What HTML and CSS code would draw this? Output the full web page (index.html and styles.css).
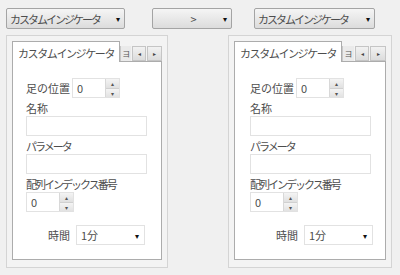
FILE: index.html
```html
<!DOCTYPE html>
<html lang="ja">
  <head>
    <meta charset="UTF-8" />
    <meta name="viewport" content="width=device-width, initial-scale=1.0" />
    <title>インジケータ設定</title>

    <link rel="stylesheet" href="styles.css">
  </head>

  <body>
    <div class="toolbar">
      <div class="combo combo-left">
        <span class="combo-text kana">カスタムインジケータ</span>
        <span class="arrow">&#9662;</span>
      </div>
      <div class="combo combo-mid">
        <span class="combo-text center">&gt;</span>
        <span class="arrow">&#9662;</span>
      </div>
      <div class="combo combo-right">
        <span class="combo-text kana">カスタムインジケータ</span>
        <span class="arrow">&#9662;</span>
      </div>
    </div>

    <div class="panels">
      <section class="panel panel-left">
        <div class="tabs">
          <div class="tab">カスタムインジケータ</div>
          <div class="tab-clip">ヨ</div>
          <div class="tab-btn">&#9666;</div>
          <div class="tab-btn">&#9656;</div>
        </div>
        <div class="tab-body">
          <div class="row">
            <label>足の位置</label>
            <div class="spin">
              <span class="spin-val">0</span>
              <div class="spin-btns"><span>&#9652;</span><span>&#9662;</span></div>
            </div>
          </div>
          <label class="cap">名称</label>
          <div class="field"></div>
          <label class="cap kana">パラメータ</label>
          <div class="field"></div>
          <label class="cap kana">配列インデックス番号</label>
          <div class="spin">
            <span class="spin-val">0</span>
            <div class="spin-btns"><span>&#9652;</span><span>&#9662;</span></div>
          </div>
          <div class="row time">
            <label>時間</label>
            <div class="select"><span>1分</span><span class="arrow">&#9662;</span></div>
          </div>
        </div>
      </section>

      <section class="panel panel-right">
        <div class="tabs">
          <div class="tab">カスタムインジケータ</div>
          <div class="tab-clip">ヨ</div>
          <div class="tab-btn">&#9666;</div>
          <div class="tab-btn">&#9656;</div>
        </div>
        <div class="tab-body">
          <div class="row">
            <label>足の位置</label>
            <div class="spin">
              <span class="spin-val">0</span>
              <div class="spin-btns"><span>&#9652;</span><span>&#9662;</span></div>
            </div>
          </div>
          <label class="cap">名称</label>
          <div class="field"></div>
          <label class="cap kana">パラメータ</label>
          <div class="field"></div>
          <label class="cap kana">配列インデックス番号</label>
          <div class="spin">
            <span class="spin-val">0</span>
            <div class="spin-btns"><span>&#9652;</span><span>&#9662;</span></div>
          </div>
          <div class="row time">
            <label>時間</label>
            <div class="select"><span>1分</span><span class="arrow">&#9662;</span></div>
          </div>
        </div>
      </section>
    </div>
  </body>
</html>
```

FILE: styles.css
```css
body {
  margin: 0;
  background-color: #f0f0f0;
  font-family: "Noto Sans CJK JP", "Noto Sans", sans-serif;
  font-size: 11px;
  color: #4d4d4d;
}

/* katakana runs are narrower in the original UI font */
.kana {
  letter-spacing: -2px;
}

/* top combo row */
.toolbar {
  display: flex;
  padding-top: 8px;
  height: 21px;
}
.combo {
  display: flex;
  align-items: center;
  box-sizing: border-box;
  height: 21px;
  border: 1px solid #a4a4a4;
  border-radius: 2px;
  background: linear-gradient(#f5f5f5, #dcdcdc);
  padding: 0 4px 0 3px;
}
.combo-left {
  margin-left: 6px;
  width: 119px;
}
.combo-mid {
  margin-left: 27px;
  width: 80px;
}
.combo-right {
  margin-left: 22px;
  width: 121px;
}
.combo-text {
  flex: 1;
  white-space: nowrap;
}
.combo-text.center {
  text-align: center;
  padding-left: 8px;
}
.arrow {
  font-size: 8px;
  color: #111;
}

/* panels */
.panels {
  display: flex;
  margin-top: 6px;
}
.panel {
  box-sizing: border-box;
  height: 233px;
  border: 1px solid #d4d4d4;
  background-color: #f3f3f3;
  padding: 5px 5px 7px 5px;
  display: flex;
  flex-direction: column;
}
.panel-left {
  margin-left: 6px;
  width: 162px;
}
.panel-right {
  margin-left: 60px;
  width: 164px;
}

.tabs {
  display: flex;
  align-items: flex-end;
  height: 21px;
  position: relative;
  z-index: 1;
  margin-bottom: -1px;
}
.tab {
  box-sizing: border-box;
  height: 21px;
  padding: 3px 5px 0 5px;
  border: 1px solid #acacac;
  border-bottom: none;
  background-color: #fff;
  white-space: nowrap;
  letter-spacing: -1.4px;
}
.tab-clip {
  width: 11px;
  height: 15px;
  font-size: 8px;
  line-height: 15px;
  text-align: center;
  color: #555;
  border-left: 1px solid #c8c8c8;
  background-color: #eaeaea;
  margin-bottom: 1px;
}
.tab-btn {
  box-sizing: border-box;
  width: 14px;
  height: 15px;
  margin-left: 1px;
  margin-bottom: 1px;
  border: 1px solid #c5c5c5;
  background: linear-gradient(#f2f2f2, #dcdcdc);
  font-size: 6px;
  line-height: 13px;
  text-align: center;
  color: #444;
}
.tab-btn + .tab-btn {
  width: 16px;
}

.tab-body {
  flex: 1;
  border: 1px solid #acacac;
  background-color: #fff;
  padding: 16px 0 0 13px;
  display: flex;
  flex-direction: column;
  align-items: flex-start;
}
.panel-right .tab-body {
  padding-left: 15px;
}

.row {
  display: flex;
  align-items: center;
  gap: 2px;
}
.cap {
  display: block;
  box-sizing: border-box;
  height: 18px;
  padding-top: 3px;
  line-height: 14px;
}

.spin {
  display: flex;
  box-sizing: border-box;
  width: 48px;
  height: 20px;
  border: 1px solid #e2e2e2;
  background-color: #fff;
}
.spin-val {
  flex: 1;
  padding-left: 4px;
  line-height: 18px;
}
.spin-btns {
  display: flex;
  flex-direction: column;
  width: 13px;
  border-left: 1px solid #d8d8d8;
}
.spin-btns span {
  flex: 1;
  background: linear-gradient(#f4f4f4, #e0e0e0);
  font-size: 6px;
  line-height: 9px;
  text-align: center;
  color: #555;
}
.spin-btns span + span {
  border-top: 1px solid #d0d0d0;
}

.field {
  box-sizing: border-box;
  width: 121px;
  height: 20px;
  border: 1px solid #e2e2e2;
  background-color: #fff;
}

.time {
  margin-top: 13px;
  margin-left: 22px;
  gap: 6px;
}
.panel-right .time {
  margin-left: 26px;
}
.select {
  display: flex;
  align-items: center;
  box-sizing: border-box;
  width: 69px;
  height: 20px;
  padding: 0 5px 0 4px;
  border: 1px solid #e2e2e2;
  background-color: #fff;
}
.select span:first-child {
  flex: 1;
}
```
